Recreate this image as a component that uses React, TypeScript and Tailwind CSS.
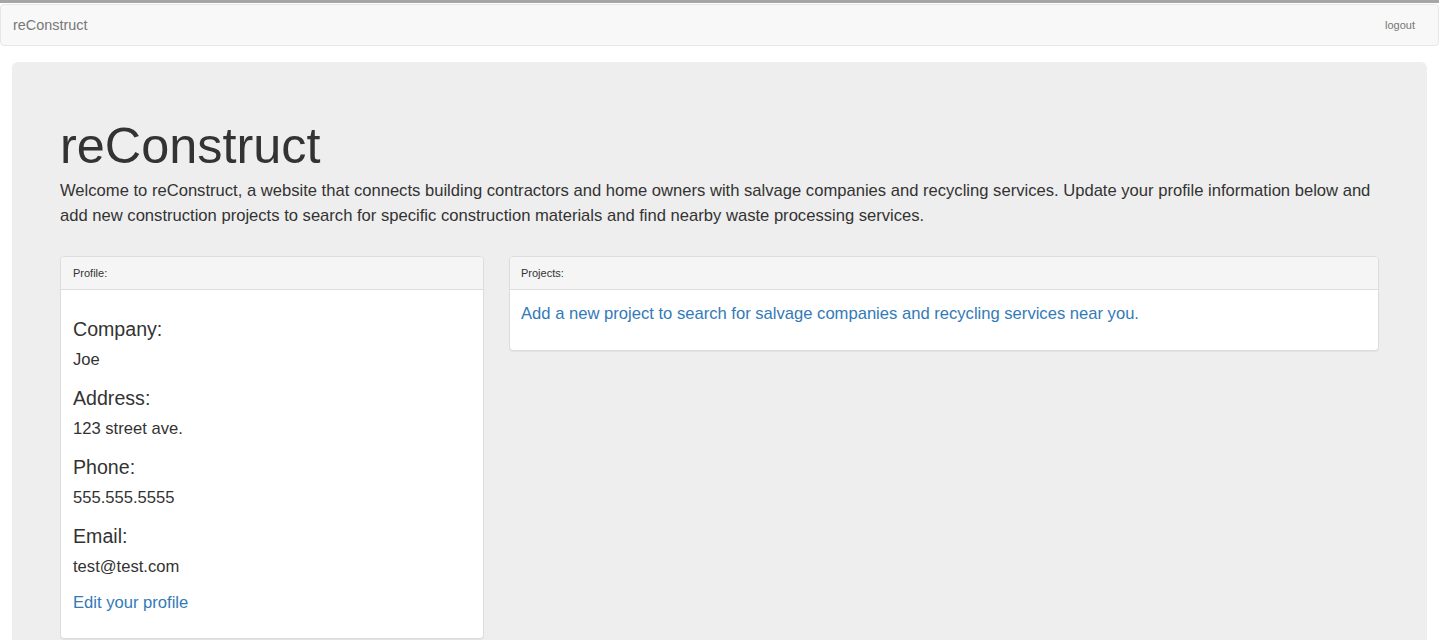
import React from "react";

const font = { fontFamily: '"Liberation Sans", Arial, Helvetica, sans-serif' };

function Field({ label, value }: { label: string; value: string }) {
  return (
    <div className="mb-[16px]">
      <div className="text-[19.6px] leading-[22px] text-[#333]">{label}</div>
      <div className="mt-[9px] text-[16.6px] leading-[22px] text-[#333]">{value}</div>
    </div>
  );
}

export default function App() {
  return (
    <div className="min-h-[640px] bg-white overflow-hidden" style={font}>
      <div className="h-[3px] bg-[#a6a6a6]" />
      <div className="mt-px h-[42px] flex items-center justify-between border border-[#e7e7e7] bg-[#f8f8f8] rounded-[4px] pl-[12px] pr-[23px]">
        <span className="text-[14.4px] text-[#777] pt-[2px]">reConstruct</span>
        <span className="text-[11px] text-[#777]">logout</span>
      </div>
      <div className="mx-[12px] mt-[16px] bg-[#eeeeee] rounded-[6px] px-[48px] pt-[56px] pb-[48px] min-h-[600px]">
        <h1 className="text-[50.4px] leading-[55px] text-[#333] m-0 font-normal">reConstruct</h1>
        <p className="mt-[5px] text-[16.6px] leading-[25px] text-[#333]">
          Welcome to reConstruct, a website that connects building contractors and home owners with salvage companies and recycling services. Update your profile information below and add new construction projects to search for specific construction materials and find nearby waste processing services.
        </p>
        <div className="mt-[28px] grid grid-cols-[424px_1fr] gap-[25px] items-start">
          <div className="bg-white border border-[#ddd] rounded-[4px] shadow-[0_1px_1px_rgba(0,0,0,0.05)]">
            <div className="h-[33px] bg-[#f5f5f5] border-b border-[#ddd] rounded-t-[4px] px-[12px] flex items-center text-[11px] text-[#333]">
              Profile:
            </div>
            <div className="px-[12px] pt-[28px] pb-[25px]">
              <Field label="Company:" value="Joe" />
              <Field label="Address:" value="123 street ave." />
              <Field label="Phone:" value="555.555.5555" />
              <Field label="Email:" value="test@test.com" />
              <div className="mt-[-2px] mb-[-1px] text-[16.6px] leading-[22px] text-[#337ab7]">Edit your profile</div>
            </div>
          </div>
          <div className="bg-white border border-[#ddd] rounded-[4px] shadow-[0_1px_1px_rgba(0,0,0,0.05)]">
            <div className="h-[33px] bg-[#f5f5f5] border-b border-[#ddd] rounded-t-[4px] px-[11px] flex items-center text-[11px] text-[#333]">
              Projects:
            </div>
            <div className="px-[11px] pt-[13px] pb-[25px]">
              <div className="text-[16.6px] leading-[22px] text-[#337ab7]">
                Add a new project to search for salvage companies and recycling services near you.
              </div>
            </div>
          </div>
        </div>
      </div>
    </div>
  );
}
